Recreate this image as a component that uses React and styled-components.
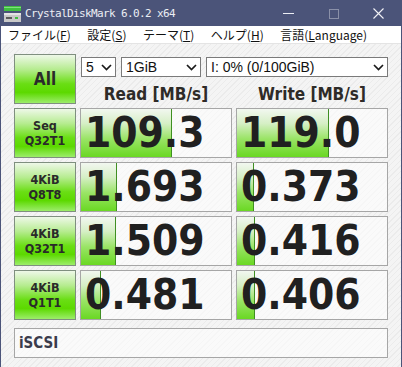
import React from 'react';
import styled, { createGlobalStyle } from 'styled-components';

const GlobalStyle = createGlobalStyle`
  html, body {
    margin: 0;
    padding: 0;
    background: #ffffff;
  }
`;

const rows = [
  { top: 'Seq', bottom: 'Q32T1', read: '109.3', write: '119.0' },
  { top: '4KiB', bottom: 'Q8T8', read: '1.693', write: '0.373' },
  { top: '4KiB', bottom: 'Q32T1', read: '1.509', write: '0.416' },
  { top: '4KiB', bottom: 'Q1T1', read: '0.481', write: '0.406' },
];

const menus = [
  { label: 'ファイル(', key: 'F', rest: ')' },
  { label: '設定(', key: 'S', rest: ')' },
  { label: 'テーマ(', key: 'T', rest: ')' },
  { label: 'ヘルプ(', key: 'H', rest: ')' },
  { label: '言語(', key: 'L', rest: 'anguage)' },
];

// log scale, like the meter in the original tool
const barWidth = value => Math.max(0, Math.round(29.6 + 30.1 * Math.log10(parseFloat(value))));

const Window = styled.div`
  width: 402px;
  height: 367px;
  box-sizing: border-box;
  border: 1px solid #4b5479;
  display: flex;
  flex-direction: column;
  background: #f5f5f5;
`;

const TitleBar = styled.div`
  height: 25px;
  background: #4b5479;
  display: flex;
  align-items: center;
  padding-left: 3px;
  color: #eceef4;
`;

const Title = styled.span`
  margin-left: 4px;
  font-family: 'DejaVu Sans Mono', 'Liberation Mono', monospace;
  font-size: 11px;
  letter-spacing: -0.62px;
`;

const Controls = styled.div`
  margin-left: auto;
  display: flex;
  align-items: center;
`;

const ControlButton = styled.div`
  width: 45px;
  height: 25px;
  display: flex;
  align-items: center;
  justify-content: center;
`;

const MenuBar = styled.div`
  height: 17px;
  background: #ffffff;
  display: flex;
  align-items: center;
  gap: 16.5px;
  padding-left: 7px;
  border-bottom: 1px solid #e4e4e4;
  font-family: 'Noto Sans CJK JP', 'DejaVu Sans', sans-serif;
  font-size: 12px;
  color: #111;
`;

const MenuItem = styled.span`
  line-height: 17px;

  u {
    text-underline-offset: 1px;
  }
`;

const Body = styled.div`
  flex: 1;
  padding: 10px 12px 0 13px;
  background-color: #f4f4f4;
  background-image: repeating-linear-gradient(
    -45deg,
    transparent 0px,
    transparent 3px,
    #ebebeb 3px,
    #ebebeb 4px
  );
  display: grid;
  grid-template-columns: 62px 152px 152px;
  grid-auto-rows: 50px;
  column-gap: 4px;
  row-gap: 4px;
  align-content: start;
`;

const GreenButton = styled.div`
  box-sizing: border-box;
  border: 1px solid #7f8f7f;
  background: linear-gradient(
    to bottom,
    #eef8e8 0%,
    #b6ec90 30%,
    #6ade14 60%,
    #5cd900 78%,
    #9ced6a 100%
  );
  display: flex;
  flex-direction: column;
  align-items: center;
  justify-content: center;
  font-family: 'DejaVu Sans Condensed', 'DejaVu Sans', sans-serif;
  font-stretch: condensed;
  font-weight: bold;
  font-size: ${({ $big }) => ($big ? '17px' : '12.5px')};
  line-height: 15px;
  color: #2a2a2a;
`;

const Header = styled.div`
  grid-column: span 2;
  display: grid;
  grid-template-columns: 152px 152px;
  column-gap: 4px;
  grid-template-rows: auto 1fr;
`;

const SelectRow = styled.div`
  grid-column: span 2;
  display: flex;
  gap: 5px;
  padding: 3px 0 0 1px;
`;

const Select = styled.div`
  box-sizing: border-box;
  width: ${({ $w }) => $w}px;
  height: 20px;
  border: 1px solid #7a7a7a;
  background: #ffffff;
  display: flex;
  align-items: center;
  padding: 0 3px 0 4px;
  font-family: 'Liberation Sans', Arial, sans-serif;
  font-size: 14px;
  color: #111;

  span {
    flex: 1;
  }
`;

const ColumnLabel = styled.div`
  display: flex;
  align-items: flex-end;
  justify-content: center;
  font-family: 'DejaVu Sans Condensed', 'DejaVu Sans', sans-serif;
  font-stretch: condensed;
  font-weight: bold;
  font-size: 17px;
  line-height: 20px;
  color: #2e2b28;
`;

const Meter = styled.div`
  position: relative;
  box-sizing: border-box;
  border: 1px solid #a6a6a6;
  background: rgba(255, 255, 255, 0.55);
  display: flex;
  align-items: center;
  overflow: hidden;
`;

const Bar = styled.div`
  position: absolute;
  left: 0;
  top: 0;
  bottom: 0;
  box-sizing: border-box;
  border-right: 1px solid #3f8f22;
  background: linear-gradient(
    to bottom,
    #f2f7f0 0%,
    #d6efc6 30%,
    #9ae466 62%,
    #6ad823 100%
  );
`;

const Value = styled.span`
  position: relative;
  padding-left: 4px;
  font-family: 'DejaVu Sans Condensed', 'DejaVu Sans', sans-serif;
  font-stretch: condensed;
  font-weight: bold;
  font-size: 42px;
  line-height: 48px;
  color: #202020;
`;

const Comment = styled.div`
  grid-column: 1 / -1;
  height: 30px;
  margin-top: 4px;
  box-sizing: border-box;
  border: 1px solid #a6a6a6;
  background: rgba(255, 255, 255, 0.55);
  display: flex;
  align-items: center;
  padding-left: 4px;
  font-family: 'DejaVu Sans Condensed', 'DejaVu Sans', sans-serif;
  font-stretch: condensed;
  font-weight: bold;
  font-size: 15px;
  color: #3a3c4c;
`;

const Chevron = () => (
  <svg width="11" height="7" viewBox="0 0 11 7">
    <polyline points="1,1 5.5,5.5 10,1" fill="none" stroke="#1a1a1a" strokeWidth="1.7" />
  </svg>
);

const AppIcon = () => (
  <svg width="17" height="16" viewBox="0 0 17 16">
    <rect x="0" y="0" width="17" height="5" fill="#3fbf3f" />
    <rect x="0" y="1" width="17" height="1" fill="#7fe07f" />
    <rect x="0" y="7" width="17" height="9" fill="#c8c8c8" />
    <rect x="0" y="7" width="17" height="2" fill="#e4e4e4" />
    <rect x="2" y="11" width="6" height="2" fill="#5a5a5a" />
    <rect x="11" y="11" width="3" height="2" fill="#3fbf3f" />
  </svg>
);

const App = () => (
  <>
    <GlobalStyle />
    <Window>
      <TitleBar>
        <AppIcon />
        <Title>CrystalDiskMark 6.0.2 x64</Title>
        <Controls>
          <ControlButton>
            <svg width="11" height="2" viewBox="0 0 11 2">
              <rect width="11" height="1" fill="#eceef4" />
            </svg>
          </ControlButton>
          <ControlButton>
            <svg width="10" height="10" viewBox="0 0 10 10">
              <rect x="0.5" y="0.5" width="9" height="9" fill="none" stroke="#8a90a8" />
            </svg>
          </ControlButton>
          <ControlButton>
            <svg width="11" height="11" viewBox="0 0 11 11">
              <path d="M0.5 0.5 L10.5 10.5 M10.5 0.5 L0.5 10.5" stroke="#f2f2f6" strokeWidth="1.1" />
            </svg>
          </ControlButton>
        </Controls>
      </TitleBar>

      <MenuBar>
        {menus.map(m => (
          <MenuItem key={m.key}>
            {m.label}
            <u>{m.key}</u>
            {m.rest}
          </MenuItem>
        ))}
      </MenuBar>

      <Body>
        <GreenButton $big>All</GreenButton>
        <Header>
          <SelectRow>
            <Select $w={35}>
              <span>5</span>
              <Chevron />
            </Select>
            <Select $w={80}>
              <span>1GiB</span>
              <Chevron />
            </Select>
            <Select $w={182}>
              <span>I: 0% (0/100GiB)</span>
              <Chevron />
            </Select>
          </SelectRow>
          <ColumnLabel>Read [MB/s]</ColumnLabel>
          <ColumnLabel>Write [MB/s]</ColumnLabel>
        </Header>

        {rows.map(row => (
          <React.Fragment key={row.top + row.bottom}>
            <GreenButton>
              <span>{row.top}</span>
              <span>{row.bottom}</span>
            </GreenButton>
            <Meter>
              <Bar style={{ width: barWidth(row.read) }} />
              <Value>{row.read}</Value>
            </Meter>
            <Meter>
              <Bar style={{ width: barWidth(row.write) }} />
              <Value>{row.write}</Value>
            </Meter>
          </React.Fragment>
        ))}

        <Comment>iSCSI</Comment>
      </Body>
    </Window>
  </>
);

export default App;
